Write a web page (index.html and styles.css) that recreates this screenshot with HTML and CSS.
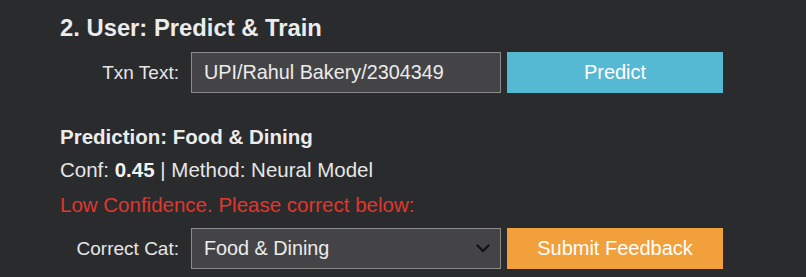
FILE: index.html
```html
<!DOCTYPE html>
<html>
<head>
<meta charset="utf-8">
<link rel="stylesheet" href="styles.css">
</head>
<body>
<section class="panel">
  <h2 class="title">2. User: Predict &amp; Train</h2>
  <div class="row">
    <label class="label">Txn Text:</label>
    <div class="field"><span class="field-text">UPI/Rahul Bakery/2304349</span></div>
    <button class="btn btn-predict">Predict</button>
  </div>
  <div class="result">
    <div class="line pred">Prediction: Food &amp; Dining</div>
    <div class="line conf">Conf: <b>0.45</b> | Method: Neural Model</div>
    <div class="line warn">Low Confidence. Please correct below:</div>
  </div>
  <div class="row row-correct">
    <label class="label">Correct Cat:</label>
    <div class="field select"><span class="field-text">Food &amp; Dining</span>
      <svg class="chev" width="14" height="9" viewBox="0 0 14 9"><path d="M1.5 1.5 L7 7 L12.5 1.5" fill="none" stroke="#111" stroke-width="2.2" stroke-linecap="round" stroke-linejoin="round"/></svg>
    </div>
    <button class="btn btn-submit">Submit Feedback</button>
  </div>
</section>
</body>
</html>
```
FILE: styles.css
```css
html, body {
  margin: 0;
  padding: 0;
  background: #2a2b2d;
}
body {
  font-family: "Liberation Sans", Arial, sans-serif;
  color: #e6e6e6;
  width: 806px;
  height: 277px;
  overflow: hidden;
}
.panel {
  padding: 14px 0 0 60px;
}
.title {
  margin: 0;
  font-size: 23.8px;
  font-weight: bold;
  line-height: 28px;
  color: #ececec;
}
.row {
  display: flex;
  align-items: center;
  margin-top: 10px;
  height: 41px;
}
.label {
  width: 119px;
  text-align: right;
  font-size: 19px;
  margin-right: 12px;
  color: #e6e6e6;
}
.field {
  box-sizing: border-box;
  width: 310px;
  height: 41px;
  background: #444446;
  border: 1.5px solid #8a8a8a;
  display: flex;
  align-items: center;
  padding-left: 12px;
  font-size: 19.8px;
  color: #ececec;
}
.select {
  justify-content: space-between;
  padding-right: 10px;
}
.btn {
  box-sizing: border-box;
  margin-left: 6px;
  width: 216px;
  height: 41px;
  border: none;
  font-family: "Liberation Sans", Arial, sans-serif;
  font-size: 20px;
  color: #ffffff;
  padding: 0;
}
.btn-predict {
  background: #56b9d3;
}
.btn-submit {
  background: #f1a03b;
}
.result {
  margin-top: 27px;
}
.line {
  font-size: 20.5px;
}
.pred {
  font-weight: bold;
  line-height: 33px;
  color: #ececec;
}
.conf {
  line-height: 34px;
}
.line b {
  color: #f2f2f2;
}
.warn {
  line-height: 35px;
  color: #e0362c;
}
.row-correct {
  margin-top: 6px;
}
```
